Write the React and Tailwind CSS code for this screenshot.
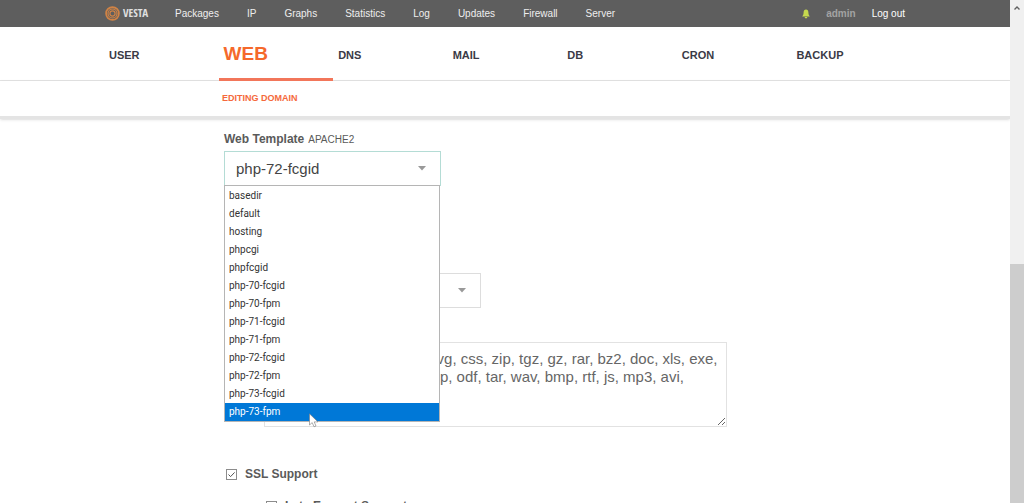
const topLinks = ["Packages", "IP", "Graphs", "Statistics", "Log", "Updates", "Firewall", "Server"];

const sections = ["USER", "WEB", "DNS", "MAIL", "DB", "CRON", "BACKUP"];

const templates = [
  "basedir",
  "default",
  "hosting",
  "phpcgi",
  "phpfcgid",
  "php-70-fcgid",
  "php-70-fpm",
  "php-71-fcgid",
  "php-71-fpm",
  "php-72-fcgid",
  "php-72-fpm",
  "php-73-fcgid",
  "php-73-fpm",
];

const extensions =
  "jpg, jpeg, gif, png, ico, svg, css, zip, tgz, gz, rar, bz2, doc, xls, exe, pdf, ppt, txt, odt, ods, odp, odf, tar, wav, bmp, rtf, js, mp3, avi, mpeg, flv, html, htm";

const Logo = () => (
  <a href="#home" aria-label="Vesta" className="flex w-[70px] items-center gap-[3px]">
    <svg width="15" height="15" viewBox="0 0 14 14" fill="none" stroke="#d08345">
      <circle cx="7" cy="7" r="6" strokeWidth="1.6" />
      <circle cx="7" cy="7" r="4.2" strokeWidth="1.1" />
      <circle cx="7" cy="7" r="2.4" strokeWidth="1.1" />
    </svg>
    <span className="font-['Open_Sans_Condensed','DejaVu_Sans_Condensed',sans-serif] text-[11px] text-[#e0e0e0]">
      VESTA
    </span>
  </a>
);

const TopBar = () => (
  <header className="bg-[#5e5e5e] text-[10px] text-[#eeeeee]">
    <div className="mx-auto flex h-[27px] w-[800px] items-center">
      <Logo />
      <nav className="flex flex-1 gap-7">
        {topLinks.map((link) => (
          <a key={link} href={`#${link}`}>
            {link}
          </a>
        ))}
      </nav>
      <div className="flex items-center">
        <button type="button" aria-label="Notifications">
          <svg width="8" height="10" viewBox="0 0 8 10" fill="#c5d94e">
            <path d="M4 0.5C5.6 0.5 6.3 1.8 6.4 3.4C6.5 5.3 6.8 6.1 7.8 7.4H0.2C1.2 6.1 1.5 5.3 1.6 3.4C1.7 1.8 2.4 0.5 4 0.5Z" />
            <path d="M2.7 8H5.3C5.2 9 4.7 9.4 4 9.4S2.8 9 2.7 8Z" />
          </svg>
        </button>
        <a href="#admin" className="ml-4 font-bold text-[#a3a3a3]">
          admin
        </a>
        <a href="#logout" className="ml-4 text-white">
          Log out
        </a>
      </div>
    </div>
  </header>
);

const SectionNav = () => (
  <nav className="border-b border-[#e3e3e3]">
    <div className="mx-auto grid h-[53px] w-[802px] grid-cols-7">
      {sections.map((section) =>
        section === "WEB" ? (
          <a
            key={section}
            href="#web"
            className="-mb-px flex items-center border-b-3 border-[#f2765a] pt-[3px] pl-[5px] text-[19px] font-bold text-[#f5692b]"
          >
            {section}
          </a>
        ) : (
          <a
            key={section}
            href={`#${section}`}
            className="flex items-center pt-[3px] pl-[5px] text-[11px] font-bold text-[#3a3a46]"
          >
            {section}
          </a>
        )
      )}
    </div>
  </nav>
);

const Check = ({ id, label, checked }) => (
  <div className="flex items-center gap-2">
    <span className="grid">
      <input
        id={id}
        type="checkbox"
        defaultChecked={checked}
        className="peer col-start-1 row-start-1 size-[11px] appearance-none border border-[#8c8c8c] bg-white"
      />
      <svg
        viewBox="0 0 11 11"
        className="pointer-events-none invisible col-start-1 row-start-1 size-[11px] peer-checked:visible"
        fill="none"
        stroke="#555555"
      >
        <path d="M2.5 5.5L4.6 7.6L8.6 3.4" />
      </svg>
    </span>
    <label htmlFor={id} className="leading-4 font-bold">
      {label}
    </label>
  </div>
);

const SelectBox = ({ value, options, className, ...props }) => (
  <div className="grid w-[217px]">
    <select
      defaultValue={value}
      className={`col-start-1 row-start-1 h-[35px] appearance-none border bg-white pl-[11px] text-[15px] text-[#444444] ${className}`}
      {...props}
    >
      {options.map((option) => (
        <option key={option}>{option}</option>
      ))}
    </select>
    <svg
      width="8"
      height="5"
      viewBox="0 0 8 5"
      className="pointer-events-none col-start-1 row-start-1 mr-[15px] self-center justify-self-end"
    >
      <path d="M0 0H8L4 4.6Z" fill="#999999" />
    </svg>
  </div>
);

const TemplateMenu = () => (
  <div className="absolute top-full left-0 -mt-px w-[216px]">
    <ul
      role="listbox"
      aria-label="Web Template"
      className="border border-[#b5b5b5] bg-white pt-px font-[Roboto,sans-serif] text-[10px] text-[#333333]"
    >
      {templates.map((name) => (
        <li
          key={name}
          role="option"
          aria-selected={name === "php-73-fpm"}
          className="h-[18px] pl-1 leading-[18px] aria-selected:bg-[#0078d7] aria-selected:text-white"
        >
          {name}
        </li>
      ))}
    </ul>
    <svg
      width="10"
      height="15"
      viewBox="0 0 10 15"
      className="pointer-events-none absolute right-[121px] -bottom-[6px]"
    >
      <path
        d="M0.5 0.8V12L3.2 9.6L5 13.8L7 13L5.2 8.9H9Z"
        fill="white"
        stroke="#777777"
        strokeWidth="0.6"
      />
    </svg>
  </div>
);

const DomainForm = () => (
  <form className="mx-auto w-[802px] pt-3 pl-[120px] text-xs text-[#5a5a5a]">
    <label htmlFor="web-template" className="flex h-5 items-baseline gap-1 leading-4 font-bold">
      Web Template <span className="text-[10px] font-normal">APACHE2</span>
    </label>
    <div className="relative w-[217px]">
      <SelectBox
        id="web-template"
        value="php-72-fcgid"
        options={templates}
        className="border-[#b4dcd5]"
      />
      <TemplateMenu />
    </div>

    <div className="mt-[87px] flex flex-col gap-[34px] pl-10">
      <SelectBox
        aria-label="Proxy Template"
        options={["", "default", "hosting"]}
        value=""
        className="border-[#dddddd]"
      />
      <textarea
        aria-label="Proxy Extensions"
        defaultValue={extensions}
        className="h-[85px] w-[463px] border border-[#e2e2e2] py-[7px] pr-1 pl-[14px] text-[15px] leading-[18px] text-[#666666]"
      />
    </div>

    <div className="mt-[39px] pl-[2px]">
      <Check id="ssl" label="SSL Support" checked />
    </div>
    <div className="mt-4 pl-[42px]">
      <Check id="letsencrypt" label="Lets Encrypt Support" />
    </div>
  </form>
);

const ScrollBar = () => (
  <div className="flex w-[14px] shrink-0 flex-col justify-between bg-[#f0f0f0]">
    <svg width="14" height="16" viewBox="0 0 14 16" fill="none" stroke="#606060" strokeWidth="1.4">
      <path d="M4.5 9.5L7 7L9.5 9.5" />
    </svg>
    <div className="h-[239px] bg-[#cdcdcd]" />
  </div>
);

export default function App() {
  return (
    <div className="flex h-screen overflow-hidden bg-white font-['Liberation_Sans',Arial,sans-serif]">
      <div className="min-w-0 flex-1 overflow-hidden">
        <TopBar />
        <SectionNav />
        <div className="border-b-3 border-[#e4e4e4] shadow-sm">
          <h1 className="mx-auto flex h-[35px] w-[802px] items-center pl-[118px] text-[9px] font-bold text-[#f5693c]">
            EDITING DOMAIN
          </h1>
        </div>
        <DomainForm />
      </div>
      <ScrollBar />
    </div>
  );
}
